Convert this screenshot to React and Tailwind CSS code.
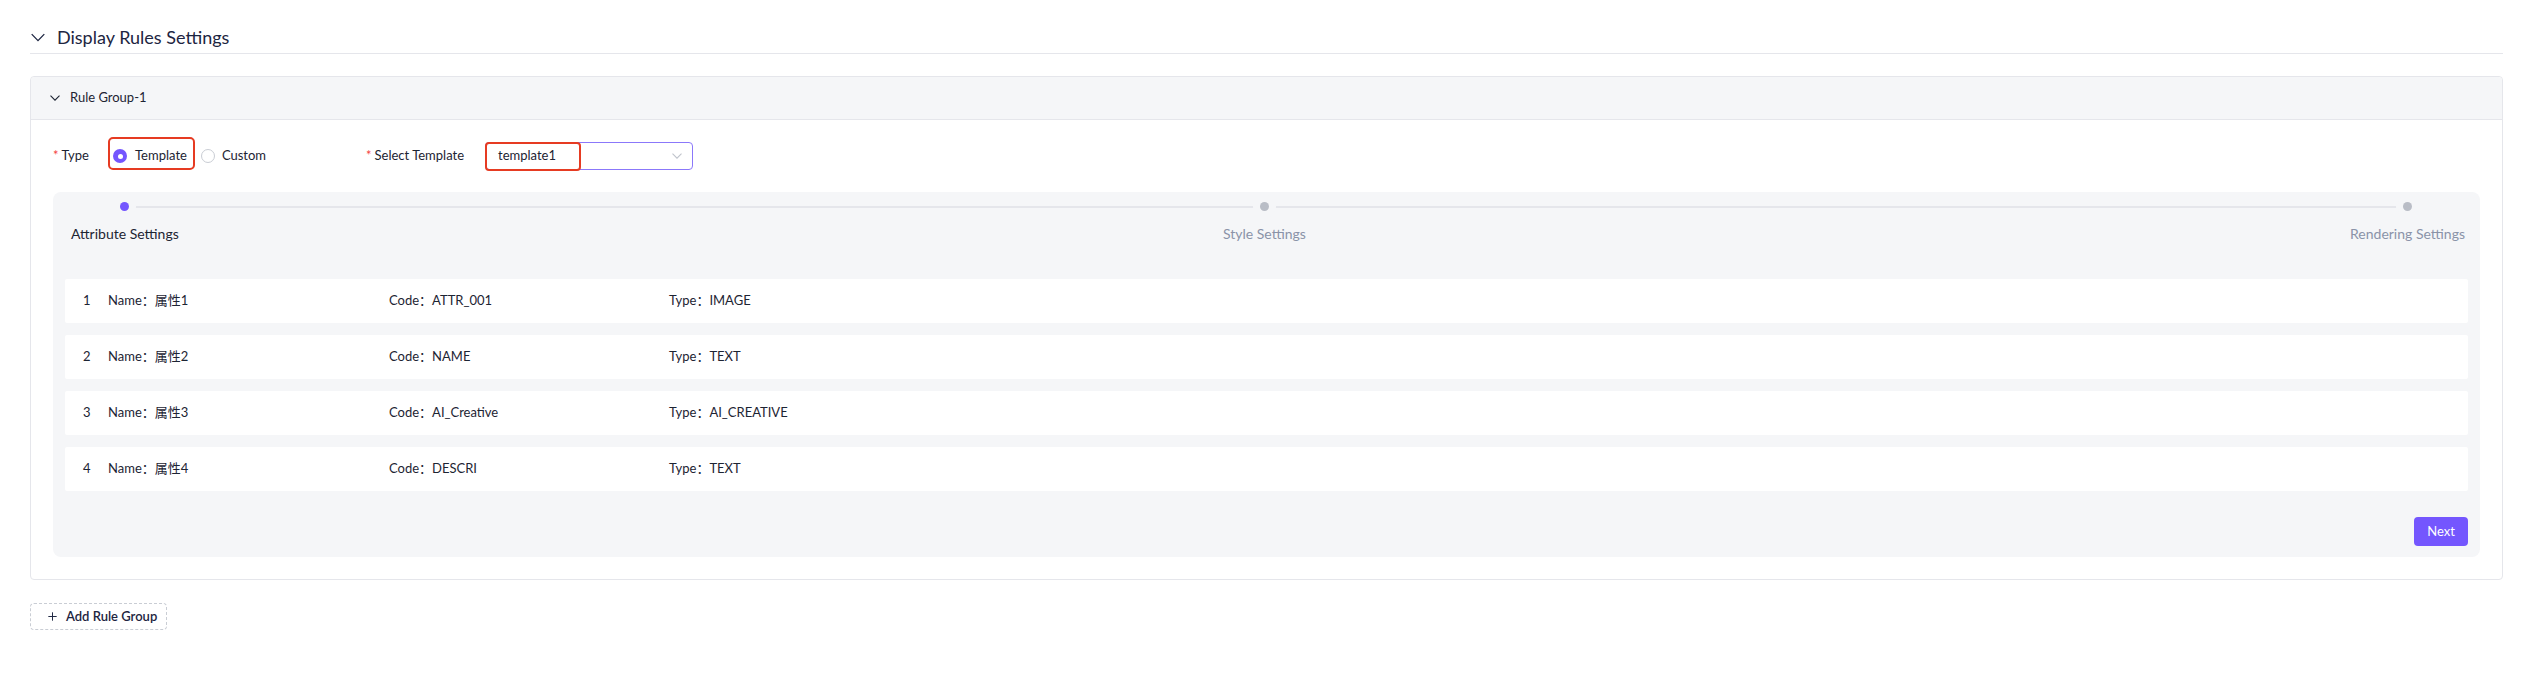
import { Plus } from "lucide-react";

const attributes = [
  { id: 1, name: "属性1", code: "ATTR_001", type: "IMAGE" },
  { id: 2, name: "属性2", code: "NAME", type: "TEXT" },
  { id: 3, name: "属性3", code: "AI_Creative", type: "AI_CREATIVE" },
  { id: 4, name: "属性4", code: "DESCRI", type: "TEXT" },
];

const steps = [
  { label: "Attribute Settings", active: true },
  { label: "Style Settings", active: false },
  { label: "Rendering Settings", active: false },
];

const Chevron = ({ className, width = 1.3 }) => (
  <svg viewBox="0 0 12 7" fill="none" className={className}>
    <path d="M0.6 0.6L6 6.2L11.4 0.6" stroke="currentColor" strokeWidth={width} />
  </svg>
);

const Required = () => <span className="text-[#f53f3f] mr-[3px]">*</span>;

const AttributeRow = ({ item }) => (
  <div className="h-[44px] bg-white rounded-[2px] flex items-center pl-[18px] text-[13px] text-[#1d2433]">
    <span className="w-[25px]">{item.id}</span>
    <span className="w-[281px]">Name：{item.name}</span>
    <span className="w-[280px]">Code：{item.code}</span>
    <span>Type：{item.type}</span>
  </div>
);

const App = () => {
  return (
    <div
      className="bg-white min-h-[678px] px-[30px] pt-[25px] pr-[20px]"
      style={{ fontFamily: "Lato, 'Noto Sans CJK SC', sans-serif" }}
    >
      {/* Section title */}
      <div className="border-b border-[#e5e6eb] pb-[4px]">
        <div className="h-6 flex items-center gap-[12px] text-[#1d2541]">
          <Chevron className="w-[14px] h-[9px] ml-[1px]" width={1.1} />
          <h2 className="text-[18px] leading-6">Display Rules Settings</h2>
        </div>
      </div>

      {/* Rule group card */}
      <div className="mt-[22px] border border-[#e5e6eb] rounded-[4px]">
        <div className="h-[43px] bg-[#f5f6f8] border-b border-[#e5e6eb] flex items-center pl-[19px] gap-[10px] text-[#1d2433] rounded-t-[4px]">
          <Chevron className="w-[10px] h-[6px]" />
          <span className="text-[13px]">Rule Group-1</span>
        </div>

        <div className="px-[22px] pt-[22px] pb-[22px]">
          {/* form row */}
          <div className="h-[28px] flex items-center text-[13px] text-[#1d2433]">
            <div className="w-[313px] flex items-center">
              <label className="w-[60px]">
                <Required />Type
              </label>
              <div className="flex items-center">
                <div className="relative h-[20px] flex items-center gap-[8px] pr-[8px]">
                  <span className="w-[14px] h-[14px] rounded-full bg-[#7456fe] flex items-center justify-center">
                    <span className="w-[5px] h-[5px] rounded-full bg-white" />
                  </span>
                  <span>Template</span>
                  <span className="absolute left-[-5px] right-0 top-[-9px] h-[33px] border-2 border-[#e63b22] rounded-[5px]" />
                </div>
                <div className="flex items-center gap-[7px] ml-[6px]">
                  <span className="w-[14px] h-[14px] rounded-full border border-[#c9cdd4] bg-white" />
                  <span>Custom</span>
                </div>
              </div>
            </div>

            <div className="flex items-center">
              <label className="w-[119px]">
                <Required />Select Template
              </label>
              <div className="relative w-[208px] h-[28px] border border-[#8b78fa] rounded-[4px] flex items-center justify-between pl-[12px] pr-[10px]">
                <span>template1</span>
                <Chevron className="w-[10px] h-[6px] text-[#c0c4cc]" />
                <span className="absolute left-[-1px] top-[-1px] w-[96px] h-[29px] border-2 border-[#e63b22] rounded-[4px]" />
              </div>
            </div>
          </div>

          {/* steps panel */}
          <div className="mt-[22px] bg-[#f5f6f8] rounded-[8px] px-[12px] pt-[10px] pb-[11px]">
            <div className="relative flex justify-between pl-[6px] pr-[3px]">
              <div className="absolute top-[3.5px] left-[62px] right-[62px] h-[2px] bg-[#e5e6eb]" />
              {steps.map((s) => (
                <div key={s.label} className="flex flex-col items-center">
                  <span
                    className={`relative w-[9px] h-[9px] rounded-full ring-[7px] ring-[#f5f6f8] ${
                      s.active ? "bg-[#7456fe]" : "bg-[#b9bdc6]"
                    }`}
                  />
                  <span
                    className={`mt-[13px] text-[14px] leading-5 ${
                      s.active ? "text-[#1d2433]" : "text-[#8a93a8]"
                    }`}
                  >
                    {s.label}
                  </span>
                </div>
              ))}
            </div>

            <div className="mt-[35px] flex flex-col gap-[12px]">
              {attributes.map((a) => (
                <AttributeRow key={a.id} item={a} />
              ))}
            </div>

            <div className="mt-[26px] flex justify-end">
              <button className="h-[29px] px-[13px] bg-[#7456fe] text-white text-[13px] rounded-[4px]">
                Next
              </button>
            </div>
          </div>
        </div>
      </div>

      {/* add group */}
      <button className="mt-[23px] h-[27px] w-[137px] border border-dashed border-[#c9cdd4] rounded-[4px] flex items-center pl-[15px] gap-[7px] text-[13px] font-semibold text-[#1d2541]">
        <Plus className="w-[13px] h-[13px]" strokeWidth={1.8} />
        Add Rule Group
      </button>
    </div>
  );
};

export default App;
